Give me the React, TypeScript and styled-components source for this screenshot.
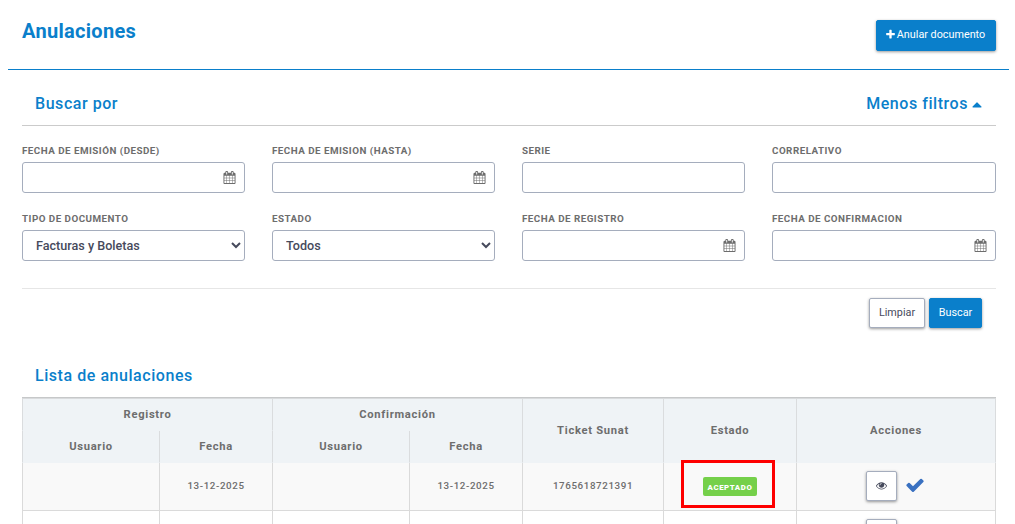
import React from 'react';
import styled, { createGlobalStyle, css } from 'styled-components';

const BLUE = '#0a7fcb';
const GREY = '#6d6d6d';

const GlobalStyle = createGlobalStyle`
  * {
    box-sizing: border-box;
  }
  html {
    overflow: hidden;
  }
  body {
    margin: 0;
    background: #fff;
    font-family: Roboto, 'Liberation Sans', sans-serif;
    color: ${GREY};
  }
`;

const Page = styled.main`
  height: 524px;
  padding: 0 6px 0 8px;
  overflow: hidden;
`;

const Header = styled.header`
  display: flex;
  justify-content: space-between;
  align-items: flex-start;
  height: 70px;
  padding: 20px 13px 0 14px;
  border-bottom: 1px solid ${BLUE};
`;

const Title = styled.h1`
  margin: 0;
  font-size: 20px;
  line-height: 23px;
  font-weight: 700;
  letter-spacing: 0.3px;
  color: ${BLUE};
`;

const Content = styled.div`
  padding: 0 13px 0 14px;
`;

const Button = styled.button<{ $width: number; $outline?: boolean; $tall?: boolean }>`
  display: inline-flex;
  align-items: center;
  justify-content: center;
  width: ${({ $width }) => $width}px;
  height: ${({ $tall }) => ($tall ? 31 : 30)}px;
  padding: ${({ $tall }) => ($tall ? '0 2px 2px 0' : '0 0 2px')};
  border: 1px solid ${BLUE};
  border-radius: 2px;
  background: ${BLUE};
  color: #fff;
  font-family: inherit;
  font-size: 10.8px;
  box-shadow: 0 1px 3px rgba(0, 0, 0, 0.4);
  ${({ $outline }) =>
    $outline &&
    css`
      border-color: #a5adbd;
      background: #fff;
      color: #464a5c;
    `}
`;

const SectionBar = styled.div`
  display: flex;
  justify-content: space-between;
  align-items: flex-start;
  height: 56px;
  padding: 24px 11px 0 13px;
  border-bottom: 1px solid #cbcbcb;
`;

const SectionTitle = styled.h2`
  margin: 0;
  font-size: 16px;
  line-height: 20px;
  font-weight: 500;
  letter-spacing: 0.55px;
  color: ${BLUE};
`;

const Toggle = styled(SectionTitle)`
  display: flex;
  align-items: center;
`;

const Filters = styled.form`
  display: grid;
  grid-template-columns: repeat(3, 223px) minmax(0, 1fr);
  gap: 11px 27px;
  height: 163px;
  padding-top: 19px;
  align-content: start;
  border-bottom: 1px solid #e6e6e6;
`;

const Field = styled.label`
  display: block;
  height: 57px;
`;

const FieldLabel = styled.span`
  display: block;
  height: 17px;
  font-size: 9.8px;
  line-height: 12px;
  font-weight: 700;
  letter-spacing: 0.48px;
  text-transform: uppercase;
  white-space: nowrap;
`;

const Control = styled.span`
  display: flex;
  align-items: center;
  height: 31px;
  border: 1px solid #a5adbd;
  border-radius: 3px;
  background: #fff;
`;

const Input = styled.input`
  flex: 1;
  min-width: 0;
  padding: 0 12px;
  border: 0;
  outline: 0;
  background: transparent;
`;

const Select = styled.select`
  width: 100%;
  height: 29px;
  padding: 0 0 0 9px;
  border: 0;
  background: transparent;
  color: #464a5c;
  font-family: inherit;
  font-size: 12.6px;
  font-weight: 500;
`;

const Icon = styled.svg<{ $size: number }>`
  width: ${({ $size }) => $size}px;
  height: ${({ $size }) => $size}px;
  flex: none;
  fill: currentColor;
`;

const CalendarIcon = styled(Icon)`
  margin-right: 8px;
`;

const PlusIcon = styled(Icon)`
  margin-right: 1px;
`;

const CaretIcon = styled(Icon)`
  margin-left: 1px;
`;

const FormActions = styled.div`
  display: flex;
  justify-content: flex-end;
  gap: 4px;
  height: 77px;
  padding: 9px 14px 0 0;
`;

const ListTitle = styled(SectionTitle)`
  height: 31px;
  padding-left: 13px;
`;

const Table = styled.table`
  width: 974px;
  table-layout: fixed;
  border-collapse: separate;
  border-spacing: 0;
  border-top: 1px solid #c6c8c9;
  text-align: center;
`;

const HeadCell = styled.th<{ $top?: boolean }>`
  height: ${({ $top }) => ($top ? 33 : 32)}px;
  padding: 0;
  border-left: 1px solid #dadcde;
  border-bottom: 1px solid #eff3f6;
  border-top: ${({ $top }) => ($top ? '1px solid #d9dbdd' : '0')};
  background: #eff3f6;
  font-size: 11.2px;
  font-weight: 700;
  letter-spacing: 0.7px;
  &:last-child {
    border-right: ${({ $top }) => ($top ? '1px solid #dadcde' : '0')};
  }
`;

const Cell = styled.td<{ $striped: boolean }>`
  height: 48px;
  padding: 0 0 2px;
  border-left: 1px solid #dadada;
  border-bottom: 1px solid #dadada;
  background: ${({ $striped }) => ($striped ? '#f9f9f9' : '#fff')};
  font-size: 9.8px;
  font-weight: 500;
  letter-spacing: 0.6px;
  &:last-child {
    padding: 0 1px 1px 0;
    border-right: 1px solid #dadada;
  }
`;

const StateWrap = styled.div`
  position: relative;
  display: flex;
  justify-content: center;
`;

const Badge = styled.span`
  width: 54px;
  height: 19px;
  margin-top: 2px;
  padding-top: 2px;
  border-radius: 2px;
  background: #75d04a;
  color: #fff;
  font-size: 7.8px;
  line-height: 18px;
  font-weight: 900;
  letter-spacing: 0.6px;
`;

const Highlight = styled.span`
  position: absolute;
  top: -15.5px;
  left: 16.5px;
  width: 94px;
  height: 48px;
  border: 3px solid #fe0000;
`;

const RowActions = styled.div`
  display: flex;
  align-items: center;
  justify-content: center;
  gap: 8px;
`;

const CheckIcon = styled(Icon)`
  margin-top: -2px;
  color: #3a71c1;
`;

const PATHS = {
  plus: 'M1600 736v192q0 40-28 68t-68 28h-416v416q0 40-28 68t-68 28h-192q-40 0-68-28t-28-68v-416h-416q-40 0-68-28t-28-68v-192q0-40 28-68t68-28h416v-416q0-40 28-68t68-28h192q40 0 68 28t28 68v416h416q40 0 68 28t28 68z',
  caret: 'M1408 1216q0 26-19 45t-45 19h-896q-26 0-45-19t-19-45 19-45l448-448q19-19 45-19t45 19l448 448q19 19 19 45z',
  check:
    'M1671 566q0 40-28 68l-724 724-136 136q-28 28-68 28t-68-28l-136-136-362-362q-28-28-28-68t28-68l136-136q28-28 68-28t68 28l294 295 656-657q28-28 68-28t68 28l136 136q28 28 28 68z',
  eye: 'M1664 960q-152-236-381-353 61 104 61 225 0 185-131.5 316.5t-316.5 131.5-316.5-131.5-131.5-316.5q0-121 61-225-229 117-381 353 133 205 333.5 326.5t434.5 121.5 434.5-121.5 333.5-326.5zm-720-384q0-20-14-34t-34-14q-125 0-214.5 89.5t-89.5 214.5q0 20 14 34t34 14 34-14 14-34q0-86 61-147t147-61q20 0 34-14t14-34zm848 384q0 34-20 69-140 230-376.5 368.5t-499.5 138.5-499.5-139-376.5-368q-20-35-20-69t20-69q140-229 376.5-368t499.5-139 499.5 139 376.5 368q20 35 20 69z',
  calendar:
    'M192 1664h288v-288h-288v288zm352 0h320v-288h-320v288zm-352-352h288v-320h-288v320zm352 0h320v-320h-320v320zm-352-384h288v-288h-288v288zm736 736h320v-288h-320v288zm-384-736h320v-288h-320v288zm768 736h288v-288h-288v288zm-384-352h320v-320h-320v320zm-352-864v-288q0-13-9.5-22.5t-22.5-9.5h-64q-13 0-22.5 9.5t-9.5 22.5v288q0 13 9.5 22.5t22.5 9.5h64q13 0 22.5-9.5t9.5-22.5zm736 864h288v-320h-288v320zm-384-384h320v-288h-320v288zm384 0h288v-288h-288v288zm32-480v-288q0-13-9.5-22.5t-22.5-9.5h-64q-13 0-22.5 9.5t-9.5 22.5v288q0 13 9.5 22.5t22.5 9.5h64q13 0 22.5-9.5t9.5-22.5zm384-64v1280q0 52-38 90t-90 38h-1408q-52 0-90-38t-38-90v-1280q0-52 38-90t90-38h128v-96q0-66 47-113t113-47h64q66 0 113 47t47 113v96h384v-96q0-66 47-113t113-47h64q66 0 113 47t47 113v96h128q52 0 90 38t38 90z',
};

type FilterField = { label: string; type: 'date' | 'text' | 'select'; value?: string };

const fields: FilterField[] = [
  { label: 'Fecha de emisión (desde)', type: 'date' },
  { label: 'Fecha de emision (hasta)', type: 'date' },
  { label: 'Serie', type: 'text' },
  { label: 'Correlativo', type: 'text' },
  { label: 'Tipo de documento', type: 'select', value: 'Facturas y Boletas' },
  { label: 'Estado', type: 'select', value: 'Todos' },
  { label: 'Fecha de registro', type: 'date' },
  { label: 'Fecha de confirmacion', type: 'date' },
];

const columnWidths = [137, 113, 137, 113, 141, 133, 200];

const rows = [
  { registered: '13-12-2025', confirmed: '13-12-2025', ticket: '1765618721391', state: 'ACEPTADO' },
  { registered: '', confirmed: '', ticket: '', state: '' },
];

const App = () => {
  return (
    <Page>
      <GlobalStyle />
      <Header>
        <Title>Anulaciones</Title>
        <Button
          $width={120}
          $tall
        >
          <PlusIcon
            $size={11}
            viewBox='0 0 1792 1792'
          >
            <path d={PATHS.plus} />
          </PlusIcon>
          Anular documento
        </Button>
      </Header>
      <Content>
        <SectionBar>
          <SectionTitle>Buscar por</SectionTitle>
          <Toggle>
            Menos filtros
            <CaretIcon
              $size={16}
              viewBox='0 0 1792 1792'
            >
              <path d={PATHS.caret} />
            </CaretIcon>
          </Toggle>
        </SectionBar>
        <Filters>
          {fields.map(({ label, type, value }) => (
            <Field key={label}>
              <FieldLabel>{label}</FieldLabel>
              <Control>
                {type === 'select' ? (
                  <Select defaultValue={value}>
                    <option>{value}</option>
                  </Select>
                ) : (
                  <Input type='text' />
                )}
                {type === 'date' && (
                  <CalendarIcon
                    $size={13}
                    viewBox='0 0 1792 1792'
                  >
                    <path d={PATHS.calendar} />
                  </CalendarIcon>
                )}
              </Control>
            </Field>
          ))}
        </Filters>
        <FormActions>
          <Button
            $width={56}
            $outline
          >
            Limpiar
          </Button>
          <Button $width={53}>Buscar</Button>
        </FormActions>
        <ListTitle>Lista de anulaciones</ListTitle>
        <Table>
          <colgroup>
            {columnWidths.map((width, i) => (
              <col
                key={i}
                width={width}
              />
            ))}
          </colgroup>
          <thead>
            <tr>
              <HeadCell
                $top
                colSpan={2}
              >
                Registro
              </HeadCell>
              <HeadCell
                $top
                colSpan={2}
              >
                Confirmación
              </HeadCell>
              {['Ticket Sunat', 'Estado', 'Acciones'].map((name) => (
                <HeadCell
                  key={name}
                  $top
                  rowSpan={2}
                >
                  {name}
                </HeadCell>
              ))}
            </tr>
            <tr>
              <HeadCell>Usuario</HeadCell>
              <HeadCell>Fecha</HeadCell>
              <HeadCell>Usuario</HeadCell>
              <HeadCell>Fecha</HeadCell>
            </tr>
          </thead>
          <tbody>
            {rows.map(({ registered, confirmed, ticket, state }, i) => (
              <tr key={i}>
                <Cell $striped={i % 2 === 0} />
                <Cell $striped={i % 2 === 0}>{registered}</Cell>
                <Cell $striped={i % 2 === 0} />
                <Cell $striped={i % 2 === 0}>{confirmed}</Cell>
                <Cell $striped={i % 2 === 0}>{ticket}</Cell>
                <Cell $striped={i % 2 === 0}>
                  {state && (
                    <StateWrap>
                      <Badge>{state}</Badge>
                      <Highlight />
                    </StateWrap>
                  )}
                </Cell>
                <Cell $striped={i % 2 === 0}>
                  <RowActions>
                    <Button
                      $width={31}
                      $outline
                      aria-label='Ver'
                    >
                      <Icon
                        $size={11}
                        viewBox='0 0 1792 1792'
                      >
                        <path d={PATHS.eye} />
                      </Icon>
                    </Button>
                    <CheckIcon
                      $size={20}
                      viewBox='0 0 1792 1792'
                    >
                      <path d={PATHS.check} />
                    </CheckIcon>
                  </RowActions>
                </Cell>
              </tr>
            ))}
          </tbody>
        </Table>
      </Content>
    </Page>
  );
};

export default App;
